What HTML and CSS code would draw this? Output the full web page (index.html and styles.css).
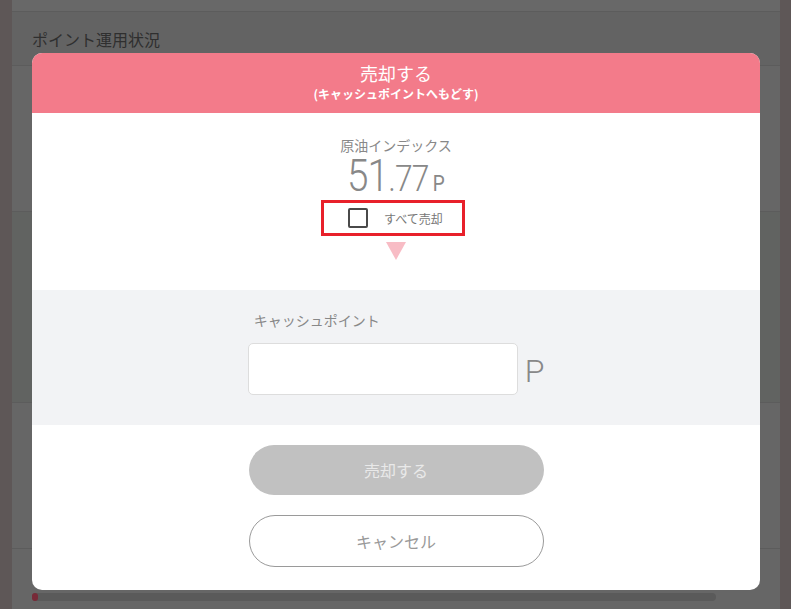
FILE: index.html
```html
<!DOCTYPE html>
<html lang="ja">
<head>
<meta charset="utf-8">
<title>売却する</title>
<link rel="stylesheet" href="styles.css">
</head>
<body>
<div class="frame">
  <div class="strip"></div>
  <main class="page">
    <div class="band band-top"></div>
    <div class="band band-head"><h2 class="page-title">ポイント運用状況</h2></div>
    <div class="band band-a"></div>
    <div class="band band-b"></div>
    <div class="band band-c"></div>
    <div class="band band-d">
      <div class="scroll"><span class="scroll-thumb"></span></div>
    </div>

    <section class="modal">
      <header class="modal-head">
        <div class="modal-title">売却する</div>
        <div class="modal-sub">(キャッシュポイントへもどす)</div>
      </header>
      <div class="modal-top">
        <div class="fund-name">原油インデックス</div>
        <div class="amount"><span class="amt-int">51</span><span class="amt-dec">.77</span><span class="amt-unit">P</span></div>
        <label class="sell-all">
          <span class="checkbox"></span>
          <span class="sell-all-text">すべて売却</span>
        </label>
        <div class="arrow"></div>
      </div>
      <div class="modal-mid">
        <div class="field">
          <div class="field-label">キャッシュポイント</div>
          <div class="field-row">
            <div class="input"></div>
            <span class="unit">P</span>
          </div>
        </div>
      </div>
      <div class="modal-actions">
        <button class="btn btn-submit" disabled>売却する</button>
        <button class="btn btn-cancel">キャンセル</button>
      </div>
    </section>
  </main>
  <div class="strip"></div>
</div>
</body>
</html>
```

FILE: styles.css
```css
* { box-sizing: border-box; }
html, body { margin: 0; padding: 0; }
body {
  width: 791px;
  height: 609px;
  overflow: hidden;
  font-family: "Noto Sans CJK JP", "Noto Sans", sans-serif;
  background: #666666;
}
.frame {
  display: flex;
  height: 609px;
}
.strip {
  width: 12px;
  background: #5e5757;
  flex: none;
}
.strip:last-child { width: 11px; }
.page {
  flex: 1;
  position: relative;
  display: flex;
  flex-direction: column;
}
.band { border-bottom: 1px solid #5c5c5c; background: #666666; }
.band-top { height: 12px; background: #686868; }
.band-head { height: 54px; background: #636363; padding-left: 20px; }
.page-title {
  margin: 0;
  padding-top: 16px;
  font-size: 16px;
  font-weight: 400;
  line-height: 22px;
  color: #2f2f2f;
}
.band-a { height: 146px; }
.band-b { height: 191px; background: #616361; }
.band-c { height: 146px; }
.band-d { flex: 1; border-bottom: 0; padding: 44px 0 0 20px; }
.scroll {
  width: 684px;
  height: 8px;
  border-radius: 4px;
  background: #5a5a5a;
}
.scroll-thumb {
  display: block;
  width: 6px;
  height: 8px;
  border-radius: 3px;
  background: #772a38;
}

.modal {
  position: absolute;
  left: 20px;
  top: 53px;
  width: 728px;
  height: 537px;
  background: #ffffff;
  border-radius: 10px;
  overflow: hidden;
  display: flex;
  flex-direction: column;
}
.modal-head {
  height: 60px;
  background: #f37b8a;
  color: #ffffff;
  text-align: center;
  padding-top: 9px;
}
.modal-title {
  font-size: 18px;
  line-height: 22px;
}
.modal-sub {
  font-size: 12px;
  font-weight: 700;
  line-height: 18px;
  margin-top: 1px;
}
.modal-top {
  height: 177px;
  display: flex;
  flex-direction: column;
  align-items: center;
  padding-top: 22px;
}
.fund-name {
  font-size: 14px;
  line-height: 20px;
  color: #888888;
}
.amount {
  display: flex;
  align-items: baseline;
  height: 42px;
  font-family: Roboto, "Noto Sans", sans-serif;
  font-weight: 300;
  color: #888888;
  line-height: 42px;
  transform: scaleX(0.86);
}
.amt-int { font-size: 45px; letter-spacing: -1px; }
.amt-dec { font-size: 37px; letter-spacing: -1px; }
.amt-unit { font-size: 22px; font-weight: 400; margin-left: 5px; }
.sell-all {
  display: flex;
  align-items: center;
  width: 144px;
  height: 36px;
  margin-top: 3px;
  margin-left: -6px;
  border: 3px solid #e8202a;
  padding-left: 24px;
}
.checkbox {
  width: 20px;
  height: 20px;
  border: 2px solid #4a4a4a;
  border-radius: 2px;
}
.sell-all-text {
  margin-left: 16px;
  font-size: 12px;
  color: #777777;
}
.arrow {
  margin-top: 6px;
  width: 0;
  height: 0;
  border-left: 10px solid transparent;
  border-right: 10px solid transparent;
  border-top: 18px solid #f8bcc5;
}
.modal-mid {
  height: 135px;
  background: #f2f3f5;
  display: flex;
  justify-content: center;
  padding-top: 20px;
}
.field-label {
  font-size: 14px;
  line-height: 20px;
  color: #888888;
  padding-left: 6px;
}
.field-row {
  display: flex;
  align-items: center;
  margin-top: 10px;
}
.input {
  width: 270px;
  height: 52px;
  background: #ffffff;
  border: 1px solid #dddddd;
  border-radius: 5px;
}
.unit {
  margin-left: 7px;
  font-family: Roboto, "Noto Sans", sans-serif;
  font-weight: 300;
  font-size: 32px;
  color: #888888;
  line-height: 52px;
  margin-top: 5px;
}
.modal-actions {
  flex: 1;
  display: flex;
  flex-direction: column;
  align-items: center;
  padding-top: 20px;
  gap: 20px;
}
.btn {
  width: 295px;
  border-radius: 26px;
  font-family: "Noto Sans CJK JP", "Noto Sans", sans-serif;
  font-size: 16px;
  cursor: pointer;
  padding: 0;
}
.btn-submit {
  height: 50px;
  background: #c1c1c1;
  border: 0;
  color: #e9e9e9;
}
.btn-cancel {
  height: 52px;
  background: #ffffff;
  border: 1px solid #9a9a9a;
  color: #999999;
}
```
